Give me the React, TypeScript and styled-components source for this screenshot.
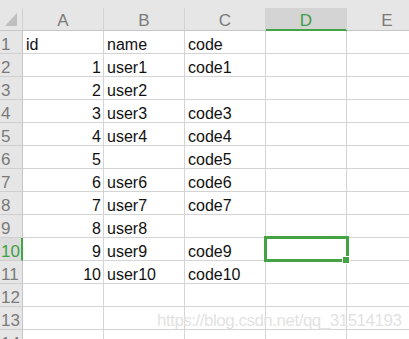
import React from "react"
import styled, { createGlobalStyle } from "styled-components"

const GlobalStyle = createGlobalStyle`
  html, body {
    margin: 0;
    padding: 0;
    background: #ffffff;
  }
`

const columns = ["A", "B", "C", "D", "E", "F"]
const activeCol = "D"
const activeRow = 10

// each row: id, name, code
const data: (string | number)[][] = [
  ["id", "name", "code"],
  [1, "user1", "code1"],
  [2, "user2", ""],
  [3, "user3", "code3"],
  [4, "user4", "code4"],
  [5, "", "code5"],
  [6, "user6", "code6"],
  [7, "user7", "code7"],
  [8, "user8", ""],
  [9, "user9", "code9"],
  [10, "user10", "code10"],
  ["", "", ""],
  ["", "", ""],
  ["", "", ""],
]

export default function App() {
  return <>
    <GlobalStyle />
    <Sheet>
      <ColHeader>
        <CornerLabel>
          <svg width="23" height="22" viewBox="0 0 23 22">
            <polygon points="17,5 17,18 5,18" fill="#bfbfbf" />
          </svg>
        </CornerLabel>
      </ColHeader>
      {columns.map((col) => (
        <ColHeader key={`col-${col}`} $active={col === activeCol}>
          <ColLabel $active={col === activeCol}>{col}</ColLabel>
        </ColHeader>
      ))}

      {data.map((row, rowIndex) => {
        const rowNo = rowIndex + 1
        return <React.Fragment key={`row-${rowNo}`}>
          <RowHeader $active={rowNo === activeRow}>{rowNo}</RowHeader>
          {columns.map((col, colIndex) => {
            const value = colIndex < row.length ? row[colIndex] : ""
            const selected = col === activeCol && rowNo === activeRow
            return <Cell key={`cell-${col}${rowNo}`} $numeric={typeof value === "number"}>
              {value}
              {selected && <Selection><FillHandle /></Selection>}
            </Cell>
          })}
        </React.Fragment>
      })}

      <Watermark>https://blog.csdn.net/qq_31514193</Watermark>
    </Sheet>
  </>
}

const Sheet = styled.div`
  position: relative;
  display: grid;
  grid-template-columns: 23px repeat(6, 81px);
  grid-auto-rows: 23px;
  grid-template-rows: 31px;
  width: 409px;
  height: 339px;
  overflow: hidden;
  background: #ffffff;
  font-family: "Liberation Sans", Arial, sans-serif;
`

const ColHeader = styled.div<{ $active?: boolean }>`
  box-sizing: border-box;
  height: 31px;
  padding-top: 8px;
  background: #e6e6e6;
  border-bottom: 1px solid ${(p) => (p.$active ? "#45a545" : "#c6c6c6")};
`

const CornerLabel = styled.div`
  box-sizing: border-box;
  height: 22px;
  border-right: 1px solid #d2d2d2;
  svg {
    display: block;
  }
`

const ColLabel = styled.div<{ $active?: boolean }>`
  box-sizing: border-box;
  height: 22px;
  padding-top: 3px;
  border-right: 1px solid #d2d2d2;
  background: ${(p) => (p.$active ? "#d4d4d4" : "#e6e6e6")};
  box-shadow: ${(p) => (p.$active ? "inset 0 -1px 0 #45a545" : "none")};
  color: ${(p) => (p.$active ? "#3f9f46" : "#7a7a7a")};
  font-size: 17px;
  line-height: 19px;
  text-align: center;
`

const RowHeader = styled.div<{ $active?: boolean }>`
  box-sizing: border-box;
  height: 23px;
  padding: 4px 0 0 1px;
  background: ${(p) => (p.$active ? "#dcdcdc" : "#e6e6e6")};
  border-bottom: 1px solid #cfcfcf;
  border-right: ${(p) => (p.$active ? "2px solid #45a545" : "1px solid #c6c6c6")};
  color: ${(p) => (p.$active ? "#3f9f46" : "#7a7a7a")};
  font-size: 17px;
  line-height: 19px;
`

const Cell = styled.div<{ $numeric?: boolean }>`
  position: relative;
  box-sizing: border-box;
  height: 23px;
  padding: 5px 2px 0 3px;
  border-right: 1px solid #d4d4d4;
  border-bottom: 1px solid #d4d4d4;
  color: #111111;
  font-size: 16px;
  line-height: 17px;
  white-space: nowrap;
  text-align: ${(p) => (p.$numeric ? "right" : "left")};
`

const Selection = styled.div`
  position: absolute;
  left: -2px;
  top: -2px;
  width: 85px;
  height: 26px;
  box-sizing: border-box;
  border: 3px solid #43a343;
  z-index: 2;
`

const FillHandle = styled.div`
  position: absolute;
  left: 76px;
  top: 18px;
  width: 6px;
  height: 6px;
  background: #43a343;
  box-shadow: 0 0 0 1px #ffffff;
`

const Watermark = styled.div`
  position: absolute;
  left: 157px;
  top: 312px;
  font-size: 17px;
  line-height: 17px;
  letter-spacing: -0.5px;
  color: rgba(205, 205, 205, 0.6);
  text-shadow: 0 0 1px rgba(255, 255, 255, 0.9);
  white-space: nowrap;
  pointer-events: none;
  z-index: 3;
`
